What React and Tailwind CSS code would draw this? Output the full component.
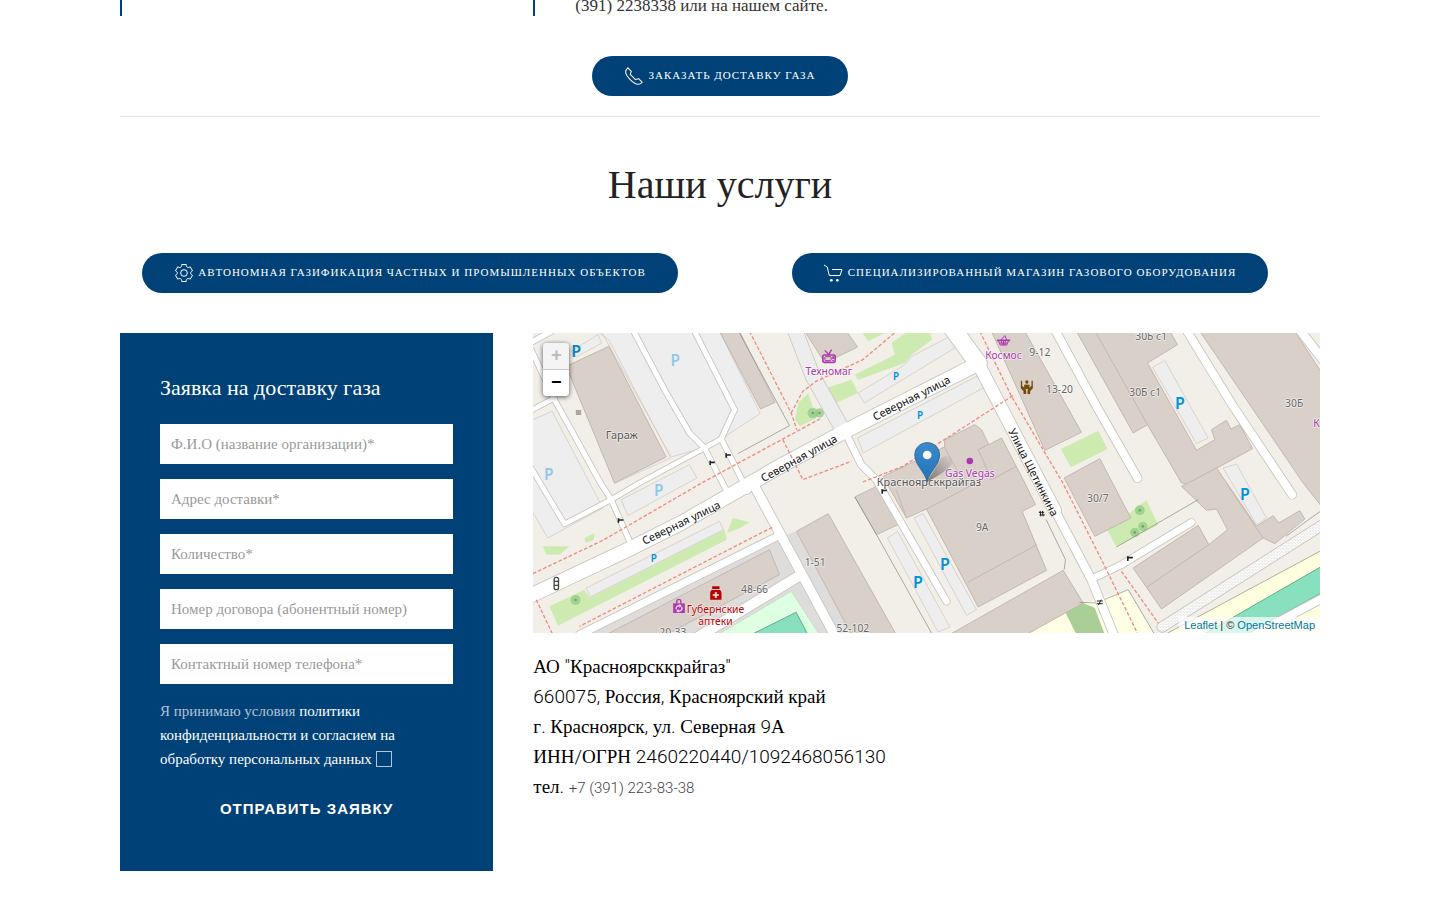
import { useState } from "react";

const formFields = [
  { name: "fio", label: "Ф.И.О (название организации)*" },
  { name: "address", label: "Адрес доставки*" },
  { name: "amount", label: "Количество*" },
  { name: "contract", label: "Номер договора (абонентный номер)" },
  { name: "phone", label: "Контактный номер телефона*" },
];

const PhoneIcon = () => (
  <svg className="w-5 h-5 shrink-0" viewBox="0 0 20 20" fill="none" stroke="currentColor" strokeWidth="1.01">
    <path d="M6.189,13.611C8.134,15.525 11.097,18.239 13.867,18.257C16.47,18.275 18.2,16.241 18.2,16.241L14.509,12.551L11.539,13.639L6.189,8.29L7.313,5.355L3.76,1.8C3.76,1.8 1.732,3.537 1.7,6.092C1.667,8.809 4.347,11.738 6.189,13.611" />
  </svg>
);

const CogIcon = () => (
  <svg className="w-5 h-5 shrink-0" viewBox="0 0 20 20" fill="none" stroke="currentColor">
    <circle cx="9.997" cy="10" r="3.31" />
    <path d="M18.488,12.285 L16.205,16.237 C15.322,15.496 14.185,15.281 13.303,15.791 C12.428,16.289 12.047,17.373 12.246,18.5 L7.735,18.5 C7.938,17.374 7.553,16.299 6.684,15.791 C5.801,15.27 4.655,15.492 3.773,16.237 L1.5,12.285 C2.573,11.871 3.317,10.999 3.317,9.991 C3.305,8.98 2.573,8.121 1.5,7.716 L3.765,3.784 C4.645,4.516 5.794,4.738 6.687,4.232 C7.555,3.722 7.939,2.637 7.735,1.5 L12.263,1.5 C12.072,2.637 12.441,3.71 13.314,4.22 C14.206,4.73 15.343,4.516 16.225,3.794 L18.487,7.714 C17.404,8.117 16.661,8.988 16.67,10.009 C16.672,11.018 17.415,11.88 18.488,12.285 Z" />
  </svg>
);

const CartIcon = () => (
  <svg className="w-5 h-5 shrink-0" viewBox="0 0 20 20">
    <circle cx="7.3" cy="17.3" r="1.4" fill="currentColor" />
    <circle cx="13.3" cy="17.3" r="1.4" fill="currentColor" />
    <polyline fill="none" stroke="currentColor" points="0 2 3.2 4 5.3 12.5 16 12.5 18 6.5 8 6.5" />
  </svg>
);

const PillButton = ({ icon, children }) => (
  <a
    href="#order"
    className="inline-flex items-center gap-1 h-10 px-8 rounded-full bg-[#004177] text-white text-[11px] leading-none tracking-[1px] uppercase whitespace-nowrap hover:bg-[#00335e]"
  >
    {icon}
    <span className="pb-0.5">{children}</span>
  </a>
);

// digits and latin marks are set in light Roboto, cyrillic stays serif
const Light = ({ children }) => (
  <span className="font-['Roboto',sans-serif] font-light">{children}</span>
);

// map geometry, 3 units per pixel
const parkings = [
  "205,-5 560,-5 682,242 565,318 510,345 415,372",
  "-5,262 58,235 210,525 45,615 -5,530",
  "115,55 195,5 207,30 130,72",
  "265,500 470,395 492,435 285,548",
  "976,180 1116,95 1136,70 1256,8 1266,45 994,210",
  "974,315 1341,125 1351,165 991,360",
  "1064,615 1094,595 1251,882 1216,897",
  "1144,555 1171,542 1331,830 1301,847",
  "1859,103 1896,83 2026,315 1991,332",
  "2071,405 2111,393 2201,555 2171,575",
];

const buildings = [
  "100,100 228,40 400,372 245,450",
  "560,-5 620,-5 727,208 683,228",
  "816,-5 941,-5 974,42 876,90",
  "220,905 710,650 740,725 400,905",
  "791,595 886,542 1090,905 956,905",
  "966,492 1031,460 1106,570 1031,605",
  "1051,430 1235,342 1236,320 1326,275 1346,290 1368,335 1406,315 1476,450 1508,515 1468,535 1541,712 1336,822 1181,528 1121,555 1061,450",
  "1250,905 1591,712 1651,810 1480,905",
  "1376,-5 1476,-5 1646,298 1536,352",
  "1631,-5 1911,-5 1934,35 1844,90 1991,352 2046,320 2036,290 2081,262 2094,288 2121,275 2159,347 1966,452 1946,450 1844,275 1801,300",
  "1594,435 1701,377 1794,555 1686,610",
  "1966,450 2051,405 2171,580 2221,548 2238,570 2301,533 2316,558 2226,632 2191,615 1886,828 1841,763 1801,705 1996,577 2028,635 2084,590 2051,528 2021,532 1946,460",
  "2001,-5 2286,-5 2370,125 2370,525 2311,450",
];

const greens = [
  "50,820 155,770 170,795 575,590 582,620 75,878",
  "30,640 110,640 80,665 40,665",
  "155,615 185,600 183,620 158,630",
  "600,555 652,568 615,588 582,600",
  "881,165 956,140 976,180 896,215",
  "786,260 796,210 826,180 851,255 801,280",
  "966,125 1086,65 1076,30 1126,-5 1190,-5 1198,20 1136,65 1116,90 976,140",
  "986,-5 1066,-5 1006,25",
  "1584,348 1696,293 1724,348 1614,403",
  "1723,590 1841,502 1876,575 1751,642",
];

const trees = [
  [128, 801, 15],
  [840, 240, 16],
  [860, 240, 14],
  [1821, 532, 15],
  [1830, 580, 14],
  [1806, 598, 14],
];

const roads = [
  { d: "M0,25 L55,-5", w: 16 },
  { d: "M-5,232 L65,195", w: 14 },
  { d: "M-5,50 L65,200 L203,450 L235,500 L295,635", w: 15 },
  { d: "M-5,405 L95,573 L235,500 L320,450 L565,318", w: 14 },
  { d: "M300,-10 L395,170 L470,300 L515,345 L590,490", w: 15 },
  { d: "M485,-5 L605,230 L565,318 L645,475", w: 15 },
  { d: "M660,450 L805,720 L905,905", w: 28 },
  { d: "M140,905 L740,607", w: 22 },
  { d: "M490,915 L800,728", w: 30 },
  { d: "M936,295 L985,395 L1030,440 L1241,805", w: 20 },
  { d: "M1566,-10 L1691,220 L1814,435", w: 24 },
  { d: "M1960,-10 L2101,220 L2278,485", w: 24 },
  { d: "M2300,-10 L2370,80", w: 26 },
  { d: "M1676,738 L1766,695 L1976,568", w: 20 },
  { d: "M2230,870 L2370,795", w: 24 },
  { d: "M1560,520 L1676,740 L1745,910", w: 25 },
  { d: "M1336,92 L1566,532", w: 37 },
  { d: "M1255,-20 L1336,92", w: 52 },
  { d: "M-20,794 L300,643 L445,570 L750,395 L936,295 L1336,92", w: 42 },
];

const footways = [
  "M0,722 L210,622 L510,448 L700,345 L861,258",
  "M650,-5 L775,240 L792,290",
  "M775,240 L810,175 L850,145 L990,80 L1085,0",
  "M750,320 L810,440 L956,385",
  "M990,447 L1110,400 L1440,188",
  "M1341,-5 L1436,190 L1590,450 L1706,680 L1816,905",
  "M1766,715 L1876,870",
  "M718,583 L140,880",
  "M10,800 L60,905",
];

const outlines = [
  "M620,0 L770,278 L615,362",
  "M966,492 L1031,605 L1196,900",
  "M1751,642 L1996,500",
  "M1540,560 L1598,680 L1594,710",
  "M1640,808 L1690,810 L1786,770 L1866,905",
  "M2260,610 L2320,565 L2370,530",
];

const buildingLines = [
  "M1181,528 L1330,450",
  "M1305,748 L1513,635",
  "M1235,342 L1276,418",
  "M1451,400 L1376,440 L1336,350 L1366,335",
  "M1841,763 L2028,635",
  "M2191,615 L2080,450",
  "M1844,275 L1690,0",
  "M1090,470 L1121,555",
];

const parkingSigns = [
  { x: 130, y: 71, size: 48, fill: "#0086c9" },
  { x: 427, y: 100, size: 46, fill: "#90c9e8" },
  { x: 48, y: 442, size: 46, fill: "#90c9e8" },
  { x: 378, y: 488, size: 46, fill: "#90c9e8" },
  { x: 363, y: 687, size: 30, fill: "#0092da" },
  { x: 1090, y: 140, size: 30, fill: "#0092da" },
  { x: 1162, y: 258, size: 30, fill: "#0092da" },
  { x: 1155, y: 764, size: 48, fill: "#0092da" },
  { x: 1236, y: 710, size: 48, fill: "#0092da" },
  { x: 1941, y: 227, size: 48, fill: "#0092da" },
  { x: 2136, y: 500, size: 48, fill: "#0092da" },
];

const labels = [
  { text: "Гараж", x: 267, y: 318, size: 33, fill: "#555" },
  { text: "48-66", x: 665, y: 780, size: 31, fill: "#666" },
  { text: "20-33", x: 420, y: 908, size: 31, fill: "#666" },
  { text: "1-51", x: 847, y: 700, size: 31, fill: "#666" },
  { text: "52-102", x: 960, y: 896, size: 31, fill: "#666" },
  { text: "9А", x: 1348, y: 595, size: 31, fill: "#666" },
  { text: "9-12", x: 1521, y: 70, size: 31, fill: "#666" },
  { text: "13-20", x: 1580, y: 180, size: 31, fill: "#666" },
  { text: "30Б с1", x: 1855, y: 22, size: 31, fill: "#666" },
  { text: "30Б с1", x: 1837, y: 190, size: 31, fill: "#666" },
  { text: "30Б", x: 2284, y: 221, size: 31, fill: "#666" },
  { text: "30/7", x: 1695, y: 508, size: 31, fill: "#666" },
  { text: "Красноярсккрайгаз", x: 1188, y: 459, size: 33, fill: "#555" },
  { text: "Gas Vegas", x: 1311, y: 432, size: 31, fill: "#ac39ac" },
  { text: "Техномаг", x: 888, y: 125, size: 31, fill: "#ac39ac" },
  { text: "Космос", x: 1412, y: 78, size: 31, fill: "#ac39ac" },
  { text: "К", x: 2351, y: 282, size: 31, fill: "#ac39ac" },
  { text: "Губернские", x: 548, y: 840, size: 31, fill: "#bf0000" },
  { text: "аптеки", x: 548, y: 875, size: 31, fill: "#bf0000" },
];

const streetNames = [
  { text: "Северная улица", x: 450, y: 580, angle: -26 },
  { text: "Северная улица", x: 804, y: 386, angle: -29 },
  { text: "Северная улица", x: 1141, y: 206, angle: -27 },
  { text: "Улица Щетинкина", x: 1491, y: 423, angle: 63 },
];

const MapTile = () => (
  <svg
    className="block w-full h-[300px] font-['Noto_Sans',sans-serif]"
    viewBox="0 0 2361 900"
    preserveAspectRatio="xMidYMid slice"
    role="img"
    aria-label="Карта: Красноярск, ул. Северная 9А"
  >
    <defs>
      <linearGradient id="pin" x1="0" y1="0" x2="0" y2="1">
        <stop offset="0" stopColor="#3b8bcb" />
        <stop offset="1" stopColor="#2272b8" />
      </linearGradient>
      <linearGradient id="pinShadow" x1="0" y1="1" x2="1" y2="0">
        <stop offset="0" stopColor="#000" stopOpacity="0.45" />
        <stop offset="1" stopColor="#000" stopOpacity="0" />
      </linearGradient>
      <pattern id="gravel" width="9" height="9" patternUnits="userSpaceOnUse">
        <rect width="9" height="9" fill="#fafafa" />
        <circle cx="2" cy="2" r="1.4" fill="#c8c4c0" />
        <circle cx="6.5" cy="6.5" r="1.4" fill="#c8c4c0" />
      </pattern>
    </defs>

    <rect width="2361" height="900" fill="#f2efe9" />
    <polygon points="150,905 740,615 790,595 960,905" fill="#dfdddc" />
    <polygon points="555,905 775,775 860,905" fill="#dfffe2" stroke="#b5dcb8" strokeWidth="2" />
    <polygon points="655,905 790,838 825,905" fill="#88e0be" stroke="#5fae8e" strokeWidth="3" />
    <polygon points="1476,905 1640,815 1786,770 1866,905" fill="#ffffe5" />
    <polygon points="1896,905 2370,650 2370,905" fill="#ffffe0" stroke="#8b8b78" strokeWidth="2" />
    <polygon points="2010,905 2370,698 2370,778 2140,905" fill="#88e0be" stroke="#5fae8e" strokeWidth="3" />
    <polygon points="1596,835 1651,810 1686,825 1716,905 1631,905" fill="#a9cf97" />

    <g fill="#eeeeee" stroke="#cfc3bd" strokeWidth="2">
      {parkings.map((p) => (
        <polygon key={p} points={p} />
      ))}
    </g>
    <g fill="#cdebb0">
      {greens.map((p) => (
        <polygon key={p} points={p} />
      ))}
    </g>
    <polygon points="160,765 560,565 572,590 172,792" fill="#eeeeee" stroke="#cfc3bd" strokeWidth="2" />
    {trees.map(([x, y, r]) => (
      <g key={`${x}-${y}`} fill="#8fc884">
        <circle cx={x} cy={y} r={r} opacity="0.7" />
        <circle cx={x} cy={y} r="4" fill="#6fa865" />
      </g>
    ))}

    <g fill="#d9d0c9" stroke="#c3b8af" strokeWidth="3">
      {buildings.map((p) => (
        <polygon key={p} points={p} />
      ))}
    </g>
    <g fill="none" stroke="#c3b8af" strokeWidth="3">
      {buildingLines.map((d) => (
        <path key={d} d={d} />
      ))}
    </g>
    <g fill="none" stroke="#85857c" strokeWidth="2">
      {outlines.map((d) => (
        <path key={d} d={d} />
      ))}
    </g>
    <path d="M244,452 L415,374 M228,20 L412,372 M200,0 L228,20" fill="none" stroke="#d3c3bb" strokeWidth="2" />

    {/* casings first so that the crossings stay open */}
    <path d="M786,-10 L840,130 L930,290" fill="none" stroke="#c9c7c4" strokeWidth="48" />
    <g fill="none" stroke="#c6c3bf" strokeLinecap="round" strokeLinejoin="round">
      {roads.map((r) => (
        <path key={r.d} d={r.d} strokeWidth={r.w + 5} />
      ))}
      <path d="M1888,882 L2370,575" strokeWidth="34" />
    </g>
    <path d="M786,-10 L840,130 L930,290" fill="none" stroke="#ededed" strokeWidth="43" />
    <g fill="none" stroke="#fff" strokeLinecap="round" strokeLinejoin="round">
      {roads.map((r) => (
        <path key={r.d} d={r.d} strokeWidth={r.w} />
      ))}
      <path d="M1888,882 L2370,575" stroke="url(#gravel)" strokeWidth="29" />
    </g>

    <g fill="none" stroke="#f08a80" strokeWidth="4" strokeDasharray="11 6">
      {footways.map((d) => (
        <path key={d} d={d} />
      ))}
    </g>

    {/* barriers and traffic lights */}
    <g fill="none" stroke="#222" strokeWidth="5">
      <path d="M532,396 V383 M532,388 H546 M580,374 V361 M580,366 H594 M257,569 V556 M257,561 H272 M1048,482 V469 M1048,472 H1062 M1785,684 V670 M1785,674 H1800" />
      <path d="M1518,538 H1534 M1520,546 H1536 M1524,550 L1522,534 M1531,550 L1529,534 M1692,804 H1710 M1692,812 H1710 M1697,816 L1705,800" strokeWidth="3" />
    </g>
    <rect x="64" y="733" width="13" height="37" rx="6" fill="#fff" stroke="#444" strokeWidth="4" />
    <path d="M64,745 H77 M64,757 H77" stroke="#444" strokeWidth="4" />
    <rect x="129" y="231" width="16" height="15" fill="#aea49f" />

    {/* tv shop */}
    <g fill="none" stroke="#ac39ac" strokeWidth="5">
      <rect x="870" y="66" width="37" height="22" rx="4" />
      <rect x="876" y="71" width="19" height="12" rx="3" strokeWidth="3" />
      <path d="M876,52 L888,65 L896,50" strokeWidth="4" />
      <path d="M901,70 V78 M901,81 V85" strokeWidth="5" />
    </g>

    {/* supermarket basket */}
    <g fill="none" stroke="#ac39ac">
      <path d="M1392,22 H1432" strokeWidth="5" />
      <path d="M1397,23 L1402,36 H1422 L1427,23 M1406,23 L1408,36 M1412,23 V36 M1418,23 L1416,36 M1400,30 H1424" strokeWidth="3" />
      <path d="M1404,21 L1416,8 L1422,21" strokeWidth="3" />
    </g>

    {/* second hand shop */}
    <rect x="421" y="811" width="35" height="29" fill="#ac39ac" />
    <path d="M432,812 V803 Q432,800 435,800 H441 Q444,800 444,803 V812" fill="none" stroke="#ac39ac" strokeWidth="4" />
    <path d="M430,829 A9,9 0 0 1 441,818 M447,822 A9,9 0 0 1 436,834" fill="none" stroke="#f3dff3" strokeWidth="4" />
    <path d="M440,812 L447,819 L439,824 Z M437,828 L430,834 L438,839 Z" fill="#f3dff3" />

    {/* bar */}
    <circle cx="1311" cy="384" r="10" fill="#ac39ac" />

    <path fillRule="evenodd" fill="#bf0000" d="M538,760 h22 v8 h-22 z M536,771 h26 q4,4 4,9 v20 h-34 v-20 q0,-5 4,-9 z M546,777 v6 h-6 v6 h6 v6 h6 v-6 h6 v-6 h-6 v-6 z" />

    {/* social centre, two hands round a figure */}
    <g fill="#734a08">
      <circle cx="1482" cy="147" r="5" />
      <path d="M1474,155 h16 v13 h-16 z" />
      <path d="M1464,143 h4 v15 l8,8 q4,4 4,8 v9 h-8 v-8 l-8,-9 z" />
      <path d="M1500,143 h-4 v15 l-8,8 q-4,4 -4,8 v9 h8 v-8 l8,-9 z" />
    </g>

    {parkingSigns.map((p) => (
      <text key={`${p.x}-${p.y}`} x={p.x} y={p.y} fill={p.fill} fontSize={p.size} fontWeight="600" textAnchor="middle">
        P
      </text>
    ))}
    <g textAnchor="middle" stroke="#fff" strokeOpacity="0.6" strokeWidth="5" strokeLinejoin="round" paintOrder="stroke">
      {labels.map((l) => (
        <text key={`${l.x}-${l.y}`} x={l.x} y={l.y} fill={l.fill} fontSize={l.size}>
          {l.text}
        </text>
      ))}
      {streetNames.map((s) => (
        <text key={s.x} fill="#111" fontSize="33" transform={`translate(${s.x} ${s.y}) rotate(${s.angle})`}>
          {s.text}
        </text>
      ))}
    </g>

    {/* marker */}
    <path d="M1183,446 L1226,374 Q1254,358 1258,388 Q1254,410 1183,446 Z" fill="url(#pinShadow)" />
    <path
      d="M1183,446 C1174,412 1146,396 1146,366 C1146,344 1163,329 1183,329 C1204,329 1220,344 1220,366 C1220,396 1192,412 1183,446 Z"
      fill="url(#pin)"
      stroke="#2e6c97"
      strokeWidth="3"
    />
    <circle cx="1183" cy="366" r="13" fill="#fff" />
  </svg>
);

const Map = () => (
  <div className="relative overflow-hidden">
    <MapTile />
    <div className="absolute left-[10px] top-[10px] flex flex-col w-[26px] rounded overflow-hidden shadow-[0_1px_5px_rgba(0,0,0,0.65)] font-['Liberation_Mono',monospace] font-bold text-center">
      <button type="button" disabled aria-label="Приблизить" className="h-[27px] bg-[#f4f4f4] text-[#bbb] text-lg leading-[26px] border-b border-[#ccc]">
        +
      </button>
      <button type="button" aria-label="Отдалить" className="h-[26px] bg-white text-black text-lg leading-[26px]">
        −
      </button>
    </div>
    <div className="absolute right-0 bottom-0 px-[5px] bg-white/70 text-[#333] text-[11px] leading-4 font-['Liberation_Sans',sans-serif]">
      <a href="#leaflet" className="text-[#0078a8] hover:underline">Leaflet</a>
      {" | © "}
      <a href="#osm" className="text-[#0078a8] hover:underline">OpenStreetMap</a>
    </div>
  </div>
);

const OrderForm = () => {
  const [values, setValues] = useState({});
  const [agreed, setAgreed] = useState(false);

  const handleChange = (e) => {
    setValues({ ...values, [e.target.name]: e.target.value });
  };

  return (
    <form id="order" onSubmit={(e) => e.preventDefault()} className="bg-[#004177] p-10 text-[15px] leading-6">
      <h3 className="text-white text-[22px] leading-[30px]">Заявка на доставку газа</h3>

      <div className="mt-[21px] flex flex-col gap-[15px]">
        {formFields.map((field) => (
          <input
            key={field.name}
            type="text"
            name={field.name}
            aria-label={field.label}
            placeholder={field.label}
            value={values[field.name] || ""}
            onChange={handleChange}
            className="w-full h-10 px-[11px] bg-white text-[#666] placeholder:text-[#999] outline-none"
          />
        ))}
      </div>

      <p className="mt-[15px] text-white/70">
        <label htmlFor="agree">Я принимаю условия </label>
        <a href="#policy" className="text-white hover:underline">
          политики конфиденциальности и согласием на обработку персональных данных
        </a>{" "}
        <input
          id="agree"
          type="checkbox"
          checked={agreed}
          onChange={(e) => setAgreed(e.target.checked)}
          className="appearance-none w-4 h-4 mb-1 align-middle border border-white/70 checked:bg-white"
        />
      </p>

      <button
        type="submit"
        className="mt-[18px] mb-0.5 block w-full h-10 text-white font-['Liberation_Sans',sans-serif] font-bold tracking-[1px] uppercase"
      >
        Отправить заявку
      </button>
    </form>
  );
};

const Address = () => (
  <address className="mt-[19px] not-italic text-black text-[19px] leading-[30px]">
    <p>АО <Light>"</Light>Красноярсккрайгаз<Light>"</Light></p>
    <p><Light>660075, </Light>Россия<Light>, </Light>Красноярский край</p>
    <p>г<Light>. </Light>Красноярск<Light>, </Light>ул<Light>. </Light>Северная <Light>9</Light>А</p>
    <p>ИНН<Light>/</Light>ОГРН <Light>2460220440/1092468056130</Light></p>
    <p>
      тел<Light>. </Light>
      <a href="tel:+73912238338" className="text-[15px] text-[#444] font-['Roboto',sans-serif] font-light">
        +7 (391) 223-83-38
      </a>
    </p>
  </address>
);

const App = () => {
  return (
    <main className="max-w-[1200px] mx-auto pb-[29px] font-['Liberation_Serif',serif] text-[#333]">
      <div className="grid grid-cols-3 gap-10 text-[17px] leading-5">
        <div className="h-4 border-l-2 border-[#004177]" />
        <div className="col-span-2 h-4 border-l-2 border-[#004177] pl-10">
          <p className="-mt-1">(391) 2238338 или на нашем сайте.</p>
        </div>
      </div>

      <div className="mt-10 flex justify-center">
        <PillButton icon={<PhoneIcon />}>Заказать доставку газа</PillButton>
      </div>

      <hr className="mt-5 border-[#e5e5e5]" />

      <h2 className="mt-10 text-center text-[40px] leading-[56px] text-[#222]">Наши услуги</h2>

      <div className="mt-10 grid grid-cols-2 gap-10 justify-items-center">
        <PillButton icon={<CogIcon />}>Автономная газификация частных и промышленных объектов</PillButton>
        <PillButton icon={<CartIcon />}>Специализированный магазин газового оборудования</PillButton>
      </div>

      <div className="mt-10 grid grid-cols-3 gap-10 items-start">
        <OrderForm />
        <section className="col-span-2">
          <Map />
          <Address />
        </section>
      </div>
    </main>
  );
};

export default App;
